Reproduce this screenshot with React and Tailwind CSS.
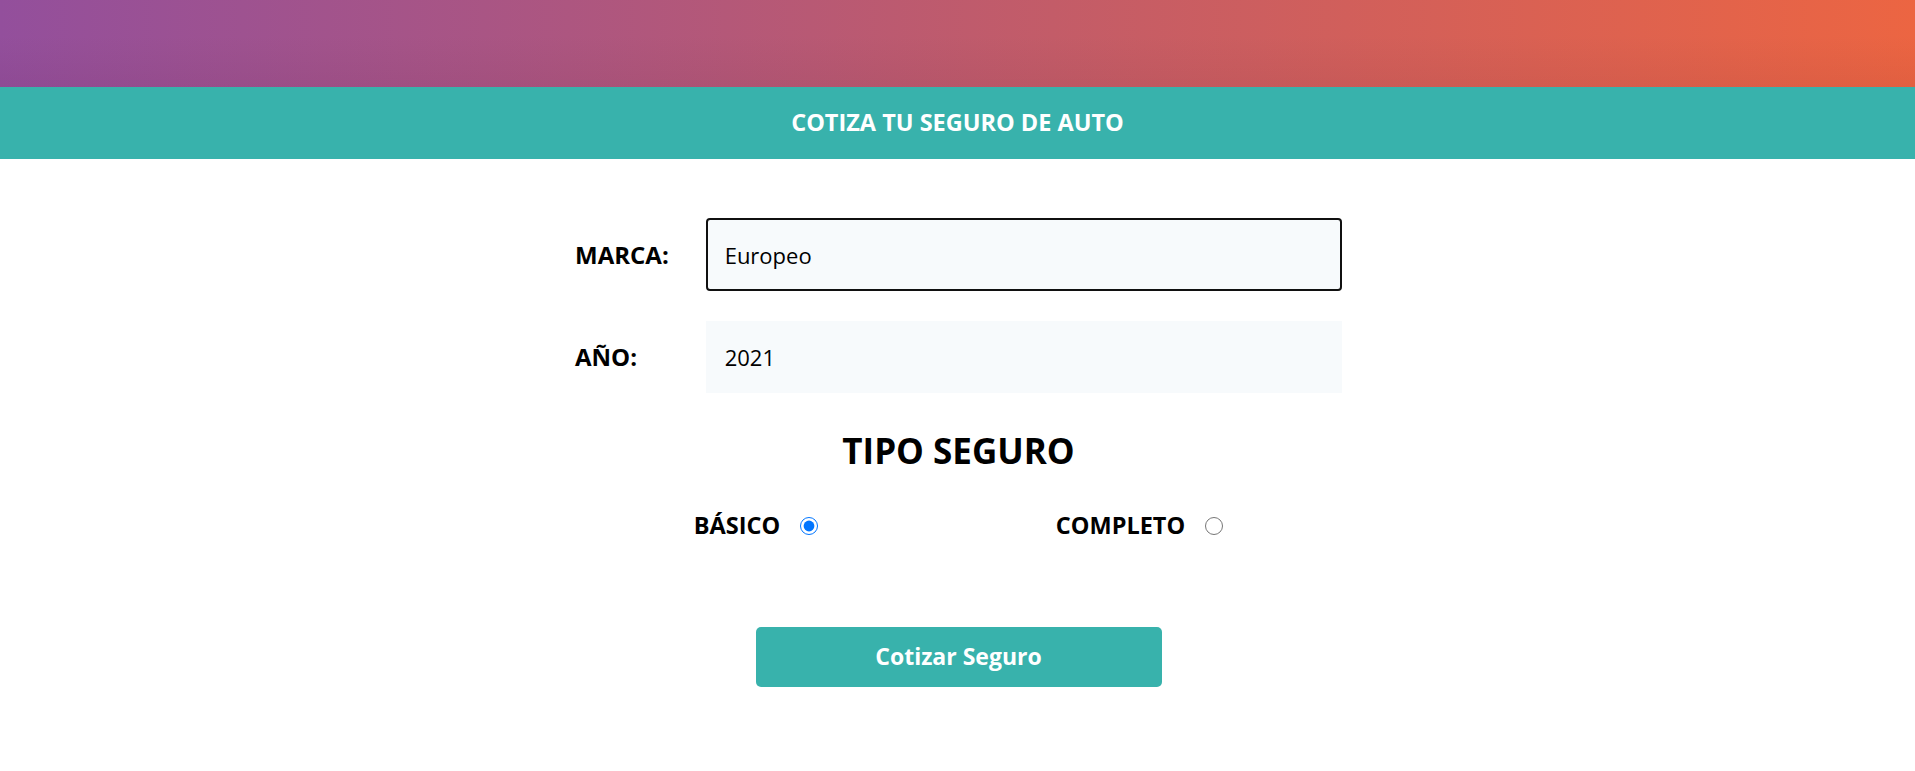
import React from "react";

export default function App() {
  const font = { fontFamily: '"Open Sans", "Noto Sans", sans-serif' };
  return (
    <div className="min-h-[771px] bg-white text-black" style={font}>
      <div className="h-[87px] bg-[linear-gradient(to_bottom,rgba(0,0,0,0)_40%,rgba(60,0,30,0.06)),linear-gradient(to_right,#934f9c,#c35c68_55%,#ec6542)]" />
      <div className="h-[72px] bg-[#38b2ac] flex items-center justify-center">
        <h1 className="text-[23.5px] font-bold text-white leading-none">COTIZA TU SEGURO DE AUTO</h1>
      </div>
      <div className="w-[769px] mx-auto pt-[59px] pl-[2px]">
        <div className="flex items-center">
          <label className="w-[131px] text-[24px] font-bold leading-none">MARCA:</label>
          <div className="w-[638px] h-[73px] bg-[#f7fafc] border-2 border-[#101010] rounded-[4px] flex items-center pl-[17px] text-[22px] leading-none">
            Europeo
          </div>
        </div>
        <div className="flex items-center mt-[30px]">
          <label className="w-[131px] text-[24px] font-bold leading-none">AÑO:</label>
          <div className="w-[638px] h-[72px] bg-[#f7fafc] flex items-center pl-[19px] text-[22px] leading-none">
            2021
          </div>
        </div>
        <h2 className="text-center text-[35px] font-bold leading-none mt-[40px]">TIPO SEGURO</h2>
        <div className="flex justify-around items-center mt-[46px]">
          <label className="flex items-center gap-[20px] text-[23.5px] font-bold leading-none">
            BÁSICO
            <input type="radio" name="plan" defaultChecked className="w-[18px] h-[18px] m-0" />
          </label>
          <label className="flex items-center gap-[20px] text-[23.5px] font-bold leading-none">
            COMPLETO
            <input type="radio" name="plan" className="w-[18px] h-[18px] m-0" />
          </label>
        </div>
        <div className="flex justify-center mt-[89px]">
          <button className="w-[406px] h-[60px] bg-[#38b2ac] rounded-[5px] text-white text-[23px] font-bold">
            Cotizar Seguro
          </button>
        </div>
      </div>
    </div>
  );
}
